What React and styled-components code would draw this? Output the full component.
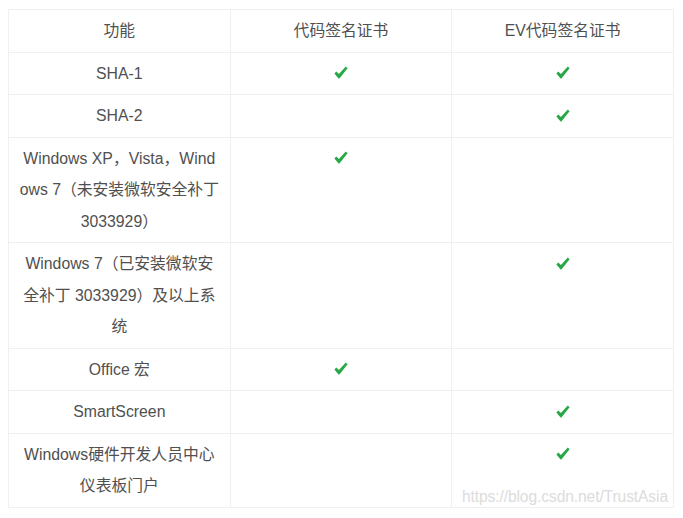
import React from "react";
import styled, { createGlobalStyle } from "styled-components";

const Global = createGlobalStyle`
  html, body { margin: 0; padding: 0; background: #ffffff; }
  body { font-family: "Liberation Sans", "Noto Sans CJK SC", sans-serif; }
`;

const Page = styled.div`
  position: relative;
  width: 683px;
  height: 518px;
  padding: 9px 9px 0 8px;
  box-sizing: border-box;
`;

const Table = styled.table`
  width: 666px;
  border-collapse: collapse;
  table-layout: fixed;
  font-family: "Liberation Sans", "Noto Sans CJK SC", sans-serif;
  font-size: 15.8px;
  color: #505050;
`;

const Cell = styled.td`
  border: 1.5px solid #f0f0f2;
  padding: 5px 6px;
  text-align: center;
  vertical-align: top;
  line-height: 31.5px;
  white-space: nowrap;
`;

const HeadCell = styled(Cell).attrs({ as: "th" })`
  font-weight: normal;
  color: #505050;
`;

const Check = styled.svg`
  display: inline-block;
  vertical-align: middle;
  width: 14px;
  height: 13px;
  margin-top: -3px;
  color: #27a847;
`;

const Watermark = styled.div`
  position: absolute;
  right: 15px;
  top: 488px;
  font-family: "Liberation Sans", sans-serif;
  font-size: 15.6px;
  color: #dcdcdc;
  letter-spacing: -0.1px;
  pointer-events: none;
`;

const Tick = () => (
  <Check viewBox="0 0 14 13">
    <path
      d="M0.4 7.4 L2.3 5.6 L4.9 8.1 L11.8 0.6 L13.6 2.2 L5.4 12.4 L4.6 12.4 Z"
      fill="currentColor"
    />
  </Check>
);

const rows = [
  { f: ["SHA-1"], a: true, b: true },
  { f: ["SHA-2"], a: false, b: true },
  {
    f: ["Windows XP，Vista，Wind", "ows 7（未安装微软安全补丁", "3033929）"],
    a: true,
    b: false,
  },
  {
    f: ["Windows 7（已安装微软安", "全补丁 3033929）及以上系", "统"],
    a: false,
    b: true,
  },
  { f: ["Office 宏"], a: true, b: false },
  { f: ["SmartScreen"], a: false, b: true },
  { f: ["Windows硬件开发人员中心", "仪表板门户"], a: false, b: true },
];

export default function App() {
  return (
    <Page>
      <Global />
      <Table>
        <thead>
          <tr>
            <HeadCell>功能</HeadCell>
            <HeadCell>代码签名证书</HeadCell>
            <HeadCell>EV代码签名证书</HeadCell>
          </tr>
        </thead>
        <tbody>
          {rows.map((r, i) => (
            <tr key={i}>
              <Cell>
                {r.f.map((line, j) => (
                  <React.Fragment key={j}>
                    {j > 0 && <br />}
                    {line}
                  </React.Fragment>
                ))}
              </Cell>
              <Cell>{r.a && <Tick />}</Cell>
              <Cell>{r.b && <Tick />}</Cell>
            </tr>
          ))}
        </tbody>
      </Table>
      <Watermark>https://blog.csdn.net/TrustAsia</Watermark>
    </Page>
  );
}
